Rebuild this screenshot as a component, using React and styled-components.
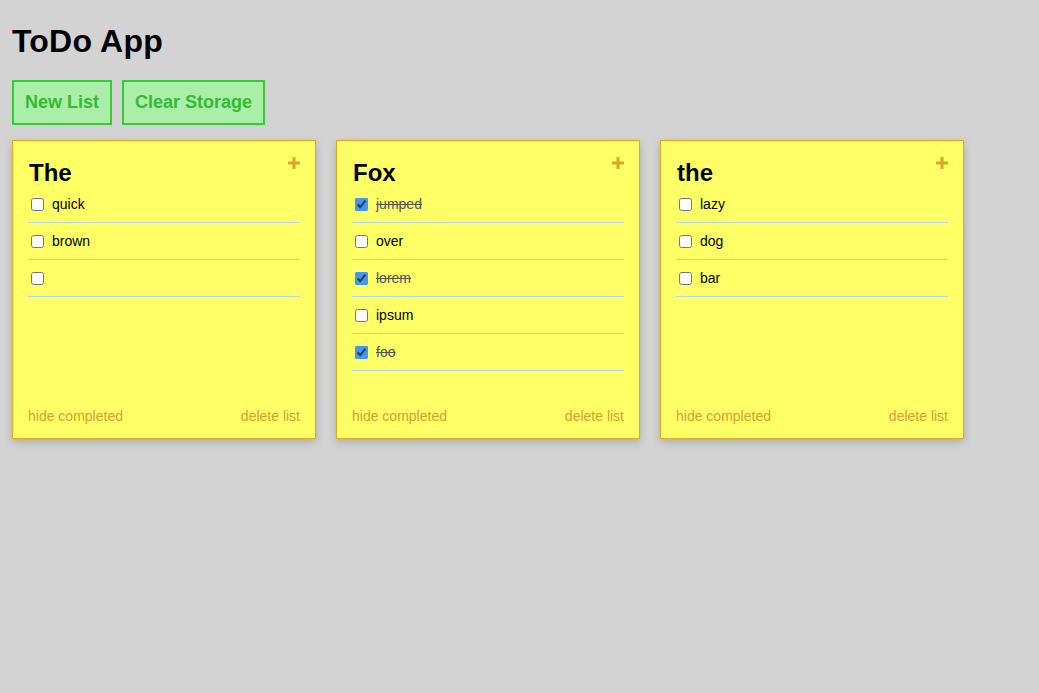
import styled, { createGlobalStyle } from "styled-components";
import { useState } from "react";

const GlobalStyle = createGlobalStyle`
  html, body {
    margin: 0;
    padding: 0;
    background: #d3d3d3;
    font-family: "Liberation Sans", Arial, Helvetica, sans-serif;
  }
`

const initialLists = [
  {
    id: 1,
    title: 'The',
    items: [
      { text: 'quick', done: false },
      { text: 'brown', done: false },
      { text: '', done: false },
    ],
  },
  {
    id: 2,
    title: 'Fox',
    items: [
      { text: 'jumped', done: true },
      { text: 'over', done: false },
      { text: 'lorem', done: true },
      { text: 'ipsum', done: false },
      { text: 'foo', done: true },
    ],
  },
  {
    id: 3,
    title: 'the',
    items: [
      { text: 'lazy', done: false },
      { text: 'dog', done: false },
      { text: 'bar', done: false },
    ],
  },
];

const Page = styled.div`
  min-height: 693px;
  box-sizing: border-box;
  padding: 23px 12px;
`

const Title = styled.h1`
  margin: 0 0 20px;
  font-size: 32px;
  line-height: 37px;
  font-weight: 700;
  letter-spacing: 0.2px;
  color: #000;
`

const Toolbar = styled.div`
  display: flex;
  gap: 10px;
  margin-bottom: 15px;
`

const Button = styled.button`
  height: 45px;
  padding: 0 11px;
  border: 2px solid #33cc33;
  background: #aaeeaa;
  color: #33bb33;
  font-family: inherit;
  font-size: 18px;
  font-weight: 700;
  cursor: pointer;
`

const Board = styled.div`
  display: flex;
  gap: 20px;
  align-items: flex-start;
`

const Card = styled.div`
  width: 304px;
  height: 299px;
  box-sizing: border-box;
  display: flex;
  flex-direction: column;
  padding: 18px 15px 14px;
  background: #ffff66;
  border: 1px solid #e0aa20;
  box-shadow: 0 3px 8px rgba(0, 0, 0, 0.18);
`

const CardHead = styled.div`
  display: flex;
  justify-content: space-between;
  align-items: flex-start;
`

const CardTitle = styled.h2`
  margin: 0 0 0 1px;
  font-size: 24px;
  line-height: 27px;
  font-weight: 700;
  color: #000;
`

const AddButton = styled.svg`
  margin-top: -2px;
  cursor: pointer;
`

const Items = styled.ul`
  list-style: none;
  margin: 0;
  padding: 0;
`

const Item = styled.li`
  display: flex;
  align-items: center;
  height: 36px;
  border-bottom: 1px solid #b4d2e6;
  font-size: 14px;
  color: ${p => (p.$done ? '#555' : '#000')};
  text-decoration: ${p => (p.$done ? 'line-through' : 'none')};
`

const Check = styled.input`
  width: 13px;
  height: 13px;
  margin: 0 8px 0 3px;
  accent-color: #3b99fc;
`

const Footer = styled.div`
  margin-top: auto;
  display: flex;
  justify-content: space-between;
  font-size: 14px;
  line-height: 16px;
  color: #d8a030;

  span {
    cursor: pointer;
  }
`

const Plus = () => (
  <AddButton width="12" height="12" viewBox="0 0 12 12">
    <rect x="4.5" y="0" width="3" height="12" fill="#dba528" />
    <rect x="0" y="4.5" width="12" height="3" fill="#dba528" />
  </AddButton>
)

export default function App() {
  const [lists, setLists] = useState(initialLists);

  const toggle = (listId, index) => {
    setLists(lists.map(list => list.id !== listId ? list : {
      ...list,
      items: list.items.map((item, i) => i === index ? { ...item, done: !item.done } : item),
    }));
  };

  return (
    <Page>
      <GlobalStyle />
      <Title>ToDo App</Title>
      <Toolbar>
        <Button>New List</Button>
        <Button>Clear Storage</Button>
      </Toolbar>
      <Board>
        {lists.map(list => (
          <Card key={list.id}>
            <CardHead>
              <CardTitle>{list.title}</CardTitle>
              <Plus />
            </CardHead>
            <Items>
              {list.items.map((item, i) => (
                <Item key={`${list.id}-${i}`} $done={item.done}>
                  <Check type="checkbox" checked={item.done} onChange={() => toggle(list.id, i)} />
                  {item.text}
                </Item>
              ))}
            </Items>
            <Footer>
              <span>hide completed</span>
              <span>delete list</span>
            </Footer>
          </Card>
        ))}
      </Board>
    </Page>
  )
}
